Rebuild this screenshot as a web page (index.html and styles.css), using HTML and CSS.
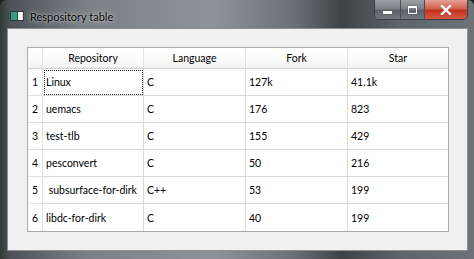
FILE: index.html
```html
<!DOCTYPE html>
<html lang="en">
<head>
    <meta charset="UTF-8">
    <title>Respository table</title>
    <link rel="stylesheet" href="styles.css">
</head>
<body>
    <div class="window">
        <div class="titlebar">
            <svg class="app-icon" width="14" height="10" viewBox="0 0 14 10">
                <rect x="0.5" y="0.5" width="13" height="9" fill="#f4f6f6" stroke="#2b3a38"/>
                <rect x="1" y="1" width="6" height="8" fill="#3c9a82"/>
                <rect x="7" y="1" width="1" height="8" fill="#1f4f45"/>
            </svg>
            <span class="title">Respository table</span>
            <div class="caption-buttons">
                <div class="cap-btn cap-min"><span class="glyph-min"></span></div>
                <div class="cap-btn cap-max"><span class="glyph-max"></span></div>
                <div class="cap-btn cap-close">
                    <svg width="14" height="10" viewBox="0 0 14 10">
                        <path d="M3 1 L11 9 M11 1 L3 9" stroke="#fff" stroke-width="2.4" stroke-linecap="square"/>
                    </svg>
                </div>
            </div>
        </div>

        <div class="client">
            <div class="grid">
                <div class="hdr corner"></div>
                <div class="hdr">Repository</div>
                <div class="hdr">Language</div>
                <div class="hdr">Fork</div>
                <div class="hdr last">Star</div>

                <div class="rownum">1</div>
                <div class="cell focus">Linux</div>
                <div class="cell">C</div>
                <div class="cell">127k</div>
                <div class="cell last">41.1k</div>

                <div class="rownum">2</div>
                <div class="cell">uemacs</div>
                <div class="cell">C</div>
                <div class="cell">176</div>
                <div class="cell last">823</div>

                <div class="rownum">3</div>
                <div class="cell">test-tlb</div>
                <div class="cell">C</div>
                <div class="cell">155</div>
                <div class="cell last">429</div>

                <div class="rownum">4</div>
                <div class="cell">pesconvert</div>
                <div class="cell">C</div>
                <div class="cell">50</div>
                <div class="cell last">216</div>

                <div class="rownum">5</div>
                <div class="cell">&nbsp;subsurface-for-dirk</div>
                <div class="cell">C++</div>
                <div class="cell">53</div>
                <div class="cell last">199</div>

                <div class="rownum bottom">6</div>
                <div class="cell bottom">libdc-for-dirk</div>
                <div class="cell bottom">C</div>
                <div class="cell bottom">40</div>
                <div class="cell bottom last">199</div>
            </div>
        </div>
    </div>
</body>
</html>
```

FILE: styles.css
```css
body {
    margin: 0;
    padding: 0;
    background: #1b1e22;
}

.window {
    width: 474px;
    height: 259px;
    box-sizing: border-box;
    padding: 0 6px 8px 7px;
    display: flex;
    flex-direction: column;
    background: linear-gradient(to right, #2f3a36 0%, #4c5157 2%, #7a8086 18%, #8e9399 45%, #6a7076 62%, #3e4348 72%, #5f656b 85%, #6c7278 100%);
    border-radius: 6px 6px 0 0;
    font-family: Lato, "Noto Sans", sans-serif;
}

.titlebar {
    height: 28px;
    display: flex;
    align-items: center;
    padding-left: 3px;
}

.app-icon {
    margin-top: 3px;
}

.title {
    margin-left: 6px;
    margin-top: 4px;
    font-size: 11px;
    color: #000;
    text-shadow: 0 0 6px rgba(255, 255, 255, 0.7), 0 0 2px rgba(255, 255, 255, 0.6);
}

.caption-buttons {
    margin-left: auto;
    align-self: flex-start;
    display: flex;
    height: 19px;
    border: 1px solid #3a3f45;
    border-top: none;
    border-radius: 0 0 5px 5px;
    overflow: hidden;
}

.cap-btn {
    display: flex;
    align-items: center;
    justify-content: center;
    height: 19px;
}

.cap-min,
.cap-max {
    width: 25px;
    background: linear-gradient(to bottom, #9aa0a6 0%, #7b8187 45%, #5c6268 55%, #727880 100%);
    border-right: 1px solid #4a4f55;
}

.cap-max {
    width: 23px;
}

.cap-close {
    width: 42px;
    background: linear-gradient(to bottom, #e5a296 0%, #d2614f 45%, #c2321f 55%, #d75a44 100%);
}

.glyph-min {
    width: 9px;
    height: 3px;
    margin-top: 5px;
    background: #fff;
    box-shadow: 0 0 1px #333;
}

.glyph-max {
    width: 7px;
    height: 5px;
    border: 1px solid #fff;
    border-top-width: 2px;
    box-shadow: 0 0 1px #333;
}

.client {
    flex: 1;
    background: #f0f0f0;
    border: 1px solid #8a9096;
    padding: 18px 18px 0 19px;
}

.grid {
    display: grid;
    grid-template-columns: 15px 101px 102px 102px 100px;
    grid-template-rows: 21px repeat(6, 27px);
    width: 420px;
    border: 1px solid #a9a9a9;
    background: #fff;
    font-size: 10.5px;
    color: #000;
}

.hdr {
    box-sizing: border-box;
    display: flex;
    align-items: center;
    justify-content: center;
    background: linear-gradient(to bottom, #ffffff 0%, #fbfbfb 60%, #f1f2f3 100%);
    border-right: 1px solid #e3e4e5;
    border-bottom: 1px solid #d5d5d5;
}

.rownum {
    box-sizing: border-box;
    display: flex;
    align-items: center;
    justify-content: center;
    background: #fff;
    border-right: 1px solid #e1e1e1;
    border-bottom: 1px solid #e1e1e1;
}

.cell {
    box-sizing: border-box;
    display: flex;
    align-items: center;
    padding-left: 3px;
    white-space: pre;
    border-right: 1px solid #d8d8d8;
    border-bottom: 1px solid #d8d8d8;
}

.last {
    border-right: none;
}

.bottom {
    border-bottom: none;
}

.focus {
    outline: 1px dotted #222;
    outline-offset: -2px;
}
```
